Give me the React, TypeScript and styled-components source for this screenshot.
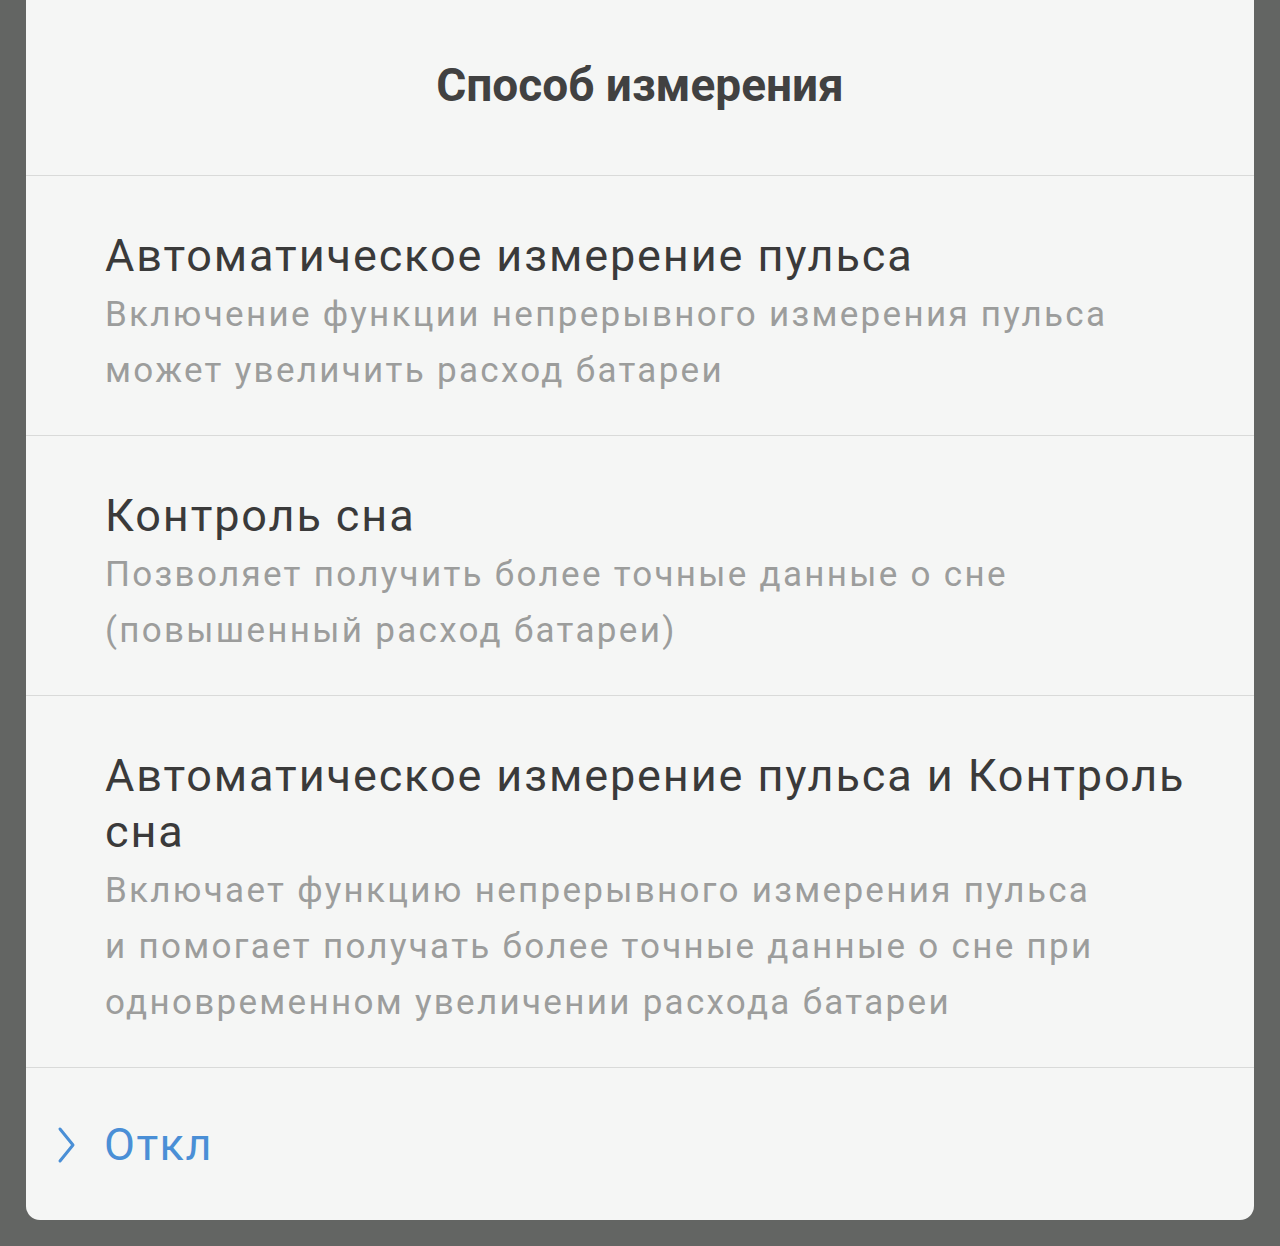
import styled, {createGlobalStyle} from "styled-components";

const Global = createGlobalStyle`
    html, body {
        margin: 0;
        padding: 0;
        background-color: #636563;
    }
    body {
        font-family: Roboto, "Noto Sans", sans-serif;
    }
`;

const Screen = styled.div`
    width: 1280px;
    height: 1246px;
    padding: 0 26px;
    box-sizing: border-box;
    background-color: #636563;
`;

const Sheet = styled.div`
    background-color: #f5f6f5;
    border-radius: 0 0 14px 14px;
    overflow: hidden;
`;

const Header = styled.div`
    height: 176px;
    display: flex;
    align-items: center;
    justify-content: center;
    padding-bottom: 6px;
    box-sizing: border-box;
    border-bottom: 1px solid #d9dad9;
`;

const Heading = styled.h1`
    margin: 0;
    font-size: 46px;
    font-weight: 700;
    color: #414141;
`;

const Option = styled.div`
    padding: 52px 60px 36px 79px;
    border-bottom: 1px solid #d9dad9;
`;

const OptionTitle = styled.div`
    font-size: 45px;
    line-height: 56px;
    letter-spacing: 1.9px;
    color: #3a3a3a;
`;

const OptionText = styled.div`
    margin-top: 3px;
    font-size: 35px;
    line-height: 56px;
    letter-spacing: 2.3px;
    color: #9c9d9c;
`;

const Footer = styled.div`
    height: 152px;
    display: flex;
    align-items: center;
    gap: 28px;
    padding: 0 0 0 31px;
`;

const Chevron = styled.svg`
    width: 19px;
    height: 38px;
    margin-top: 2px;
`;

const FooterLabel = styled.span`
    font-size: 45px;
    letter-spacing: 1.5px;
    color: #4a8fd6;
`;

const options = [
    {
        title: "Автоматическое измерение пульса",
        text: ["Включение функции непрерывного измерения пульса", "может увеличить расход батареи"],
    },
    {
        title: "Контроль сна",
        text: ["Позволяет получить более точные данные о сне", "(повышенный расход батареи)"],
    },
    {
        title: "Автоматическое измерение пульса и Контроль сна",
        text: [
            "Включает функцию непрерывного измерения пульса",
            "и помогает получать более точные данные о сне при",
            "одновременном увеличении расхода батареи",
        ],
    },
];

function App() {
    return <Screen>
        <Global/>
        <Sheet>
            <Header>
                <Heading>Способ измерения</Heading>
            </Header>
            {options.map((o) => (
                <Option key={o.title}>
                    <OptionTitle>{o.title}</OptionTitle>
                    <OptionText>
                        {o.text.map((line) => <div key={line}>{line}</div>)}
                    </OptionText>
                </Option>
            ))}
            <Footer>
                <Chevron viewBox="0 0 19 38">
                    <path d="M3 3 L16 19 L3 35" fill="none" stroke="#4a8fd6" strokeWidth="3" strokeLinecap="round" strokeLinejoin="round"/>
                </Chevron>
                <FooterLabel>Откл</FooterLabel>
            </Footer>
        </Sheet>
    </Screen>
}

export default App;
